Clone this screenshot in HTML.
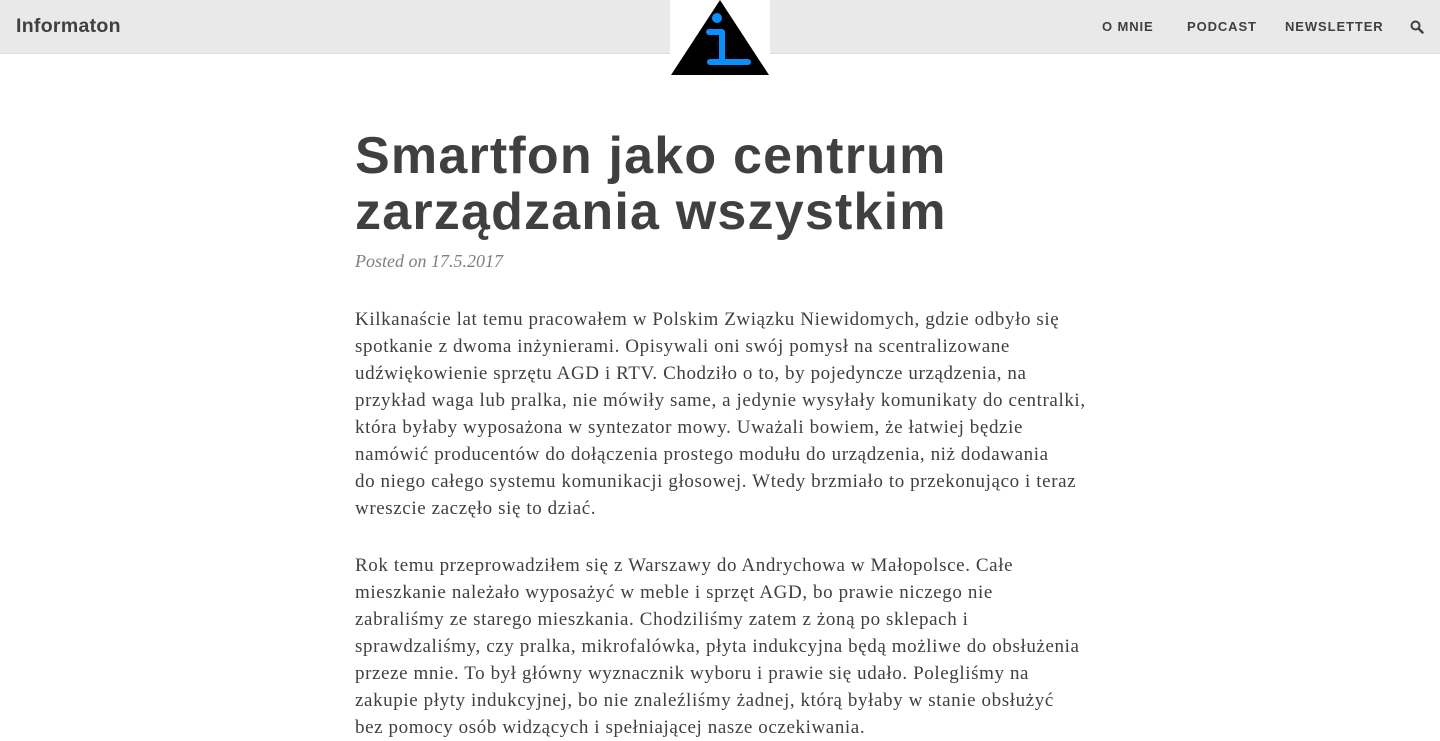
<!DOCTYPE html>
<html><head><meta charset="utf-8"><style>
*{margin:0;padding:0;box-sizing:border-box}
body{width:1440px;height:720px;overflow:hidden;background:#fff;font-family:"Liberation Serif",serif;color:#404040}
header{position:absolute;left:0;top:0;width:1440px;height:54px;background:#e9e9e9;border-bottom:1px solid #dcdcdc}
.brand{position:absolute;left:16px;top:15px;font:bold 19.5px "Liberation Sans",sans-serif;color:#404040;letter-spacing:0.3px}
nav{position:absolute;top:19px;font:bold 13px "Liberation Sans",sans-serif;letter-spacing:0.9px;color:#404040}
.logo{position:absolute;left:670px;top:0;width:100px;height:76px;background:#fff}
h1{position:absolute;left:355px;top:128px;font:bold 52px/56px "Liberation Sans",sans-serif;color:#404040;letter-spacing:1.2px}
.meta{position:absolute;left:355px;top:251px;font-style:italic;font-size:18px;color:#808080}
.p{position:absolute;left:355px;font-size:19px;line-height:27px;white-space:nowrap;letter-spacing:0.6px}
</style></head><body>
<header>
<div class="brand">Informaton</div>
<nav style="left:1102px">O MNIE</nav>
<nav style="left:1187px">PODCAST</nav>
<nav style="left:1285px">NEWSLETTER</nav>
<svg style="position:absolute;left:1410px;top:20px" width="14" height="14" viewBox="0 0 14 14"><circle cx="5.5" cy="5.5" r="4" fill="none" stroke="#404040" stroke-width="2"/><path d="M8.5 8.5L12.5 12.5" stroke="#404040" stroke-width="2.4" stroke-linecap="round"/></svg>
</header>
<div class="logo"><svg width="100" height="76" viewBox="0 0 100 76">
<polygon points="50,0 99,75 1,75" fill="#000"/>
<circle cx="47" cy="18" r="5" fill="#0a8fff"/>
<path d="M39 32H52V62" fill="none" stroke="#0a8fff" stroke-width="6" stroke-linecap="round" stroke-linejoin="round"/>
<path d="M40 62H78" stroke="#0a8fff" stroke-width="6" stroke-linecap="round"/>
</svg></div>
<h1>Smartfon jako centrum<br>zarządzania wszystkim</h1>
<div class="meta">Posted on 17.5.2017</div>
<div class="p" style="top:306px">Kilkanaście lat temu pracowałem w Polskim Związku Niewidomych, gdzie odbyło się<br>spotkanie z dwoma inżynierami. Opisywali oni swój pomysł na scentralizowane<br>udźwiękowienie sprzętu AGD i RTV. Chodziło o to, by pojedyncze urządzenia, na<br>przykład waga lub pralka, nie mówiły same, a jedynie wysyłały komunikaty do centralki,<br>która byłaby wyposażona w syntezator mowy. Uważali bowiem, że łatwiej będzie<br>namówić producentów do dołączenia prostego modułu do urządzenia, niż dodawania<br>do niego całego systemu komunikacji głosowej. Wtedy brzmiało to przekonująco i teraz<br>wreszcie zaczęło się to dziać.</div>
<div class="p" style="top:552px">Rok temu przeprowadziłem się z Warszawy do Andrychowa w Małopolsce. Całe<br>mieszkanie należało wyposażyć w meble i sprzęt AGD, bo prawie niczego nie<br>zabraliśmy ze starego mieszkania. Chodziliśmy zatem z żoną po sklepach i<br>sprawdzaliśmy, czy pralka, mikrofalówka, płyta indukcyjna będą możliwe do obsłużenia<br>przeze mnie. To był główny wyznacznik wyboru i prawie się udało. Polegliśmy na<br>zakupie płyty indukcyjnej, bo nie znaleźliśmy żadnej, którą byłaby w stanie obsłużyć<br>bez pomocy osób widzących i spełniającej nasze oczekiwania.</div>
</body></html>
